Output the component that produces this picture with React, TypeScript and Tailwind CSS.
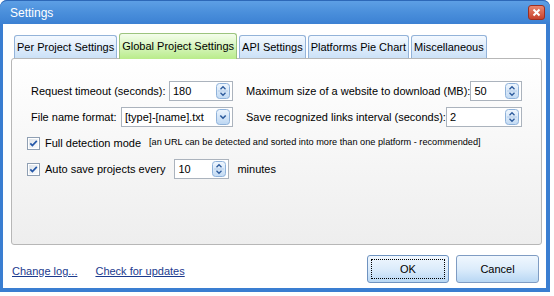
import React from "react";

function Spin() {
  return (
    <svg width="14" height="16" viewBox="0 0 14 16" className="shrink-0">
      <defs>
        <linearGradient id="spinGrad" x1="0" y1="0" x2="0" y2="1">
          <stop offset="0" stopColor="#f0f7fe" />
          <stop offset="1" stopColor="#c2daf3" />
        </linearGradient>
      </defs>
      <rect x="0.5" y="0.5" width="13" height="15" rx="3" fill="url(#spinGrad)" stroke="#8fb2da" />
      <line x1="2" y1="8" x2="12" y2="8" stroke="#b3cbe8" />
      <path d="M4.5 6.2 L7 3.7 L9.5 6.2" stroke="#2c5a9c" strokeWidth="1.3" fill="none" />
      <path d="M4.5 9.8 L7 12.3 L9.5 9.8" stroke="#2c5a9c" strokeWidth="1.3" fill="none" />
    </svg>
  );
}

function Drop() {
  return (
    <svg width="14" height="16" viewBox="0 0 14 16" className="shrink-0">
      <defs>
        <linearGradient id="dropGrad" x1="0" y1="0" x2="0" y2="1">
          <stop offset="0" stopColor="#eef6fe" />
          <stop offset="1" stopColor="#bcd6f2" />
        </linearGradient>
      </defs>
      <rect x="0.5" y="0.5" width="13" height="15" rx="3" fill="url(#dropGrad)" stroke="#8fb2da" />
      <path d="M4.3 6.5 L7 9.2 L9.7 6.5" stroke="#2c5a9c" strokeWidth="1.6" fill="none" />
    </svg>
  );
}

function Check() {
  return (
    <svg width="13" height="13" viewBox="0 0 13 13" className="shrink-0">
      <defs>
        <linearGradient id="chkGrad" x1="0" y1="0" x2="1" y2="1">
          <stop offset="0" stopColor="#dde3ea" />
          <stop offset="1" stopColor="#fbfcfd" />
        </linearGradient>
      </defs>
      <rect x="0.5" y="0.5" width="12" height="12" fill="#ffffff" stroke="#8f9fb3" />
      <rect x="2" y="2" width="9" height="9" fill="url(#chkGrad)" />
      <path d="M3.3 6.4 L5.4 8.6 L9.8 3.9" stroke="#2457a8" strokeWidth="1.7" fill="none" />
    </svg>
  );
}

function Field({ value, className }: { value: string; className: string }) {
  return (
    <div className={`h-[20px] border border-[#abb3bd] bg-white flex items-center justify-between pl-[3px] pr-[2px] ${className}`}>
      <span>{value}</span>
      <Spin />
    </div>
  );
}

const tabs = ["Per Project Settings", "Global Project Settings", "API Settings", "Platforms Pie Chart", "Miscellaneous"];

export default function App() {
  return (
    <div className="w-[554px] h-[296px] bg-white font-['Liberation_Sans',Arial,sans-serif] text-[11px] text-black">
      <div className="w-[550px] h-[292px] flex flex-col rounded-t-[7px] bg-[#3a7ed1]">
        {/* Title bar */}
        <div className="h-[24px] flex items-center justify-between pl-[10px] pr-[5px] rounded-t-[7px] border-t border-[#2d68b8] bg-gradient-to-b from-[#5d9fe5] via-[#4a8fdb] to-[#3c81d3]">
          <span className="text-white text-[12px]">Settings</span>
          <div className="w-[17px] h-[15px] rounded-[3px] border border-[#9c2f22] bg-gradient-to-b from-[#e9866f] to-[#c7412b] flex items-center justify-center">
            <svg width="9" height="9" viewBox="0 0 9 9">
              <path d="M1.5 1.5 L7.5 7.5 M7.5 1.5 L1.5 7.5" stroke="#ffffff" strokeWidth="2" />
            </svg>
          </div>
        </div>

        {/* Client area */}
        <div className="flex-1 ml-[3px] mr-[4px] mb-[4px] bg-white flex flex-col">
          <div className="pt-[9px] pl-[8px] pr-[4px]">
            <div className="relative z-10 flex items-end gap-[2px] pl-[3px] h-[25px]">
              {tabs.map((t) =>
                t === "Global Project Settings" ? (
                  <div
                    key={t}
                    className="h-[26px] -mb-[1px] px-[2px] flex items-center border border-b-0 border-[#9cc47e] rounded-t-[3px] bg-gradient-to-b from-[#f4fdec] to-[#b9ec8a]"
                  >
                    {t}
                  </div>
                ) : (
                  <div
                    key={t}
                    className="h-[23px] px-[2px] flex items-center border border-b-0 border-[#93b3d9] rounded-t-[3px] bg-gradient-to-b from-[#f4f9ff] to-[#cbe1f7]"
                  >
                    {t}
                  </div>
                )
              )}
            </div>

            <div className="h-[187px] border border-[#b7b7b7] rounded-[3px] bg-gradient-to-b from-white to-[#eeeeee] pt-[22px] pl-[15px] flex flex-col gap-[6px]">
              <div className="grid grid-cols-[202px_276px] gap-x-[13px] ml-[4px] h-[20px]">
                <div className="flex items-center justify-between whitespace-nowrap">
                  <span>Request timeout (seconds):</span>
                  <Field value="180" className="w-[64px]" />
                </div>
                <div className="flex items-center justify-between whitespace-nowrap">
                  <span>Maximum size of a website to download (MB):</span>
                  <Field value="50" className="w-[53px]" />
                </div>
              </div>

              <div className="grid grid-cols-[202px_276px] gap-x-[13px] ml-[4px] h-[20px]">
                <div className="flex items-center justify-between whitespace-nowrap">
                  <span>File name format:</span>
                  <div className="w-[112px] h-[20px] border border-[#abb3bd] bg-white flex items-center justify-between pl-[3px] pr-[2px]">
                    <span>[type]-[name].txt</span>
                    <Drop />
                  </div>
                </div>
                <div className="flex items-center justify-between whitespace-nowrap">
                  <span>Save recognized links interval (seconds):</span>
                  <Field value="2" className="w-[77px]" />
                </div>
              </div>

              <div className="flex items-center h-[20px] whitespace-nowrap">
                <Check />
                <span className="ml-[5px]">Full detection mode</span>
                <span className="ml-[8px] text-[9.2px]">
                  [an URL can be detected and sorted into more than one platform - recommended]
                </span>
              </div>

              <div className="flex items-center h-[20px] whitespace-nowrap">
                <Check />
                <span className="ml-[5px]">Auto save projects every</span>
                <Field value="10" className="w-[55px] ml-[9px]" />
                <span className="ml-[8px]">minutes</span>
              </div>
            </div>
          </div>

          {/* Footer */}
          <div className="flex-1 flex items-end justify-between pl-[9px] pr-[7px] pb-[5px]">
            <div className="flex gap-[18px] mb-[4px] text-[#1b3a8e] underline">
              <span>Change log...</span>
              <span>Check for updates</span>
            </div>
            <div className="flex gap-[7px]">
              <button className="w-[82px] h-[28px] p-[3px] rounded-[3px] border border-[#6f93c0] bg-gradient-to-b from-[#f0f7fe] via-[#dcecfb] to-[#b8d7f4]">
                <div className="h-full border border-dotted border-black flex items-center justify-center">OK</div>
              </button>
              <button className="w-[83px] h-[28px] rounded-[3px] border border-[#7f9cc3] bg-gradient-to-b from-[#f0f7fe] via-[#dcecfb] to-[#b8d7f4] flex items-center justify-center">
                Cancel
              </button>
            </div>
          </div>
        </div>
      </div>
    </div>
  );
}
